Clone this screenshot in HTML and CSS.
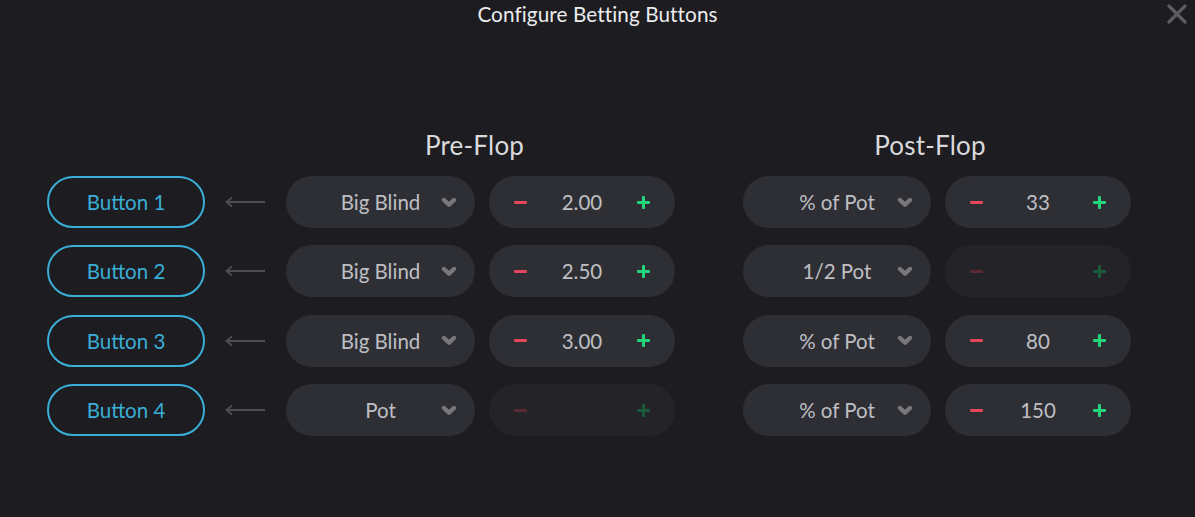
FILE: index.html
```html
<!DOCTYPE html>
<html>
<head>
<meta charset="utf-8">
<link rel="stylesheet" href="styles.css">
</head>
<body>
<div class="modal">
  <header class="title">Configure Betting Buttons</header>
  <button class="close" aria-label="Close">
    <svg width="20" height="20" viewBox="0 0 20 20"><path d="M2 2L18 18M18 2L2 18" stroke="#5b5b61" stroke-width="3.2" stroke-linecap="round"/></svg>
  </button>

  <div class="heads">
    <div class="spacer"></div>
    <div class="head pre">Pre-Flop</div>
    <div class="head post">Post-Flop</div>
  </div>

  <div class="rows">
    <div class="row">
      <div class="btn">Button 1</div>
      <div class="arrow"><svg width="40" height="12" viewBox="0 0 40 12"><path d="M7 1.5L1.5 6L7 10.5M2 6H40" stroke="#4c4c52" stroke-width="2" fill="none"/></svg></div>
      <div class="select pre-sel"><span class="val">Big Blind</span><svg class="chev" width="16" height="11" viewBox="0 0 16 11"><path d="M3 3L8 7.6L13 3" stroke="#77777c" stroke-width="4.4" fill="none" stroke-linecap="round" stroke-linejoin="round"/></svg></div>
      <div class="stepper"><span class="minus"></span><span class="num">2.00</span><span class="plus"></span></div>
      <div class="select post-sel"><span class="val">% of Pot</span><svg class="chev" width="16" height="11" viewBox="0 0 16 11"><path d="M3 3L8 7.6L13 3" stroke="#77777c" stroke-width="4.4" fill="none" stroke-linecap="round" stroke-linejoin="round"/></svg></div>
      <div class="stepper"><span class="minus"></span><span class="num">33</span><span class="plus"></span></div>
    </div>
    <div class="row">
      <div class="btn">Button 2</div>
      <div class="arrow"><svg width="40" height="12" viewBox="0 0 40 12"><path d="M7 1.5L1.5 6L7 10.5M2 6H40" stroke="#4c4c52" stroke-width="2" fill="none"/></svg></div>
      <div class="select pre-sel"><span class="val">Big Blind</span><svg class="chev" width="16" height="11" viewBox="0 0 16 11"><path d="M3 3L8 7.6L13 3" stroke="#77777c" stroke-width="4.4" fill="none" stroke-linecap="round" stroke-linejoin="round"/></svg></div>
      <div class="stepper"><span class="minus"></span><span class="num">2.50</span><span class="plus"></span></div>
      <div class="select post-sel"><span class="val">1/2 Pot</span><svg class="chev" width="16" height="11" viewBox="0 0 16 11"><path d="M3 3L8 7.6L13 3" stroke="#77777c" stroke-width="4.4" fill="none" stroke-linecap="round" stroke-linejoin="round"/></svg></div>
      <div class="stepper disabled"><span class="minus"></span><span class="num"></span><span class="plus"></span></div>
    </div>
    <div class="row">
      <div class="btn">Button 3</div>
      <div class="arrow"><svg width="40" height="12" viewBox="0 0 40 12"><path d="M7 1.5L1.5 6L7 10.5M2 6H40" stroke="#4c4c52" stroke-width="2" fill="none"/></svg></div>
      <div class="select pre-sel"><span class="val">Big Blind</span><svg class="chev" width="16" height="11" viewBox="0 0 16 11"><path d="M3 3L8 7.6L13 3" stroke="#77777c" stroke-width="4.4" fill="none" stroke-linecap="round" stroke-linejoin="round"/></svg></div>
      <div class="stepper"><span class="minus"></span><span class="num">3.00</span><span class="plus"></span></div>
      <div class="select post-sel"><span class="val">% of Pot</span><svg class="chev" width="16" height="11" viewBox="0 0 16 11"><path d="M3 3L8 7.6L13 3" stroke="#77777c" stroke-width="4.4" fill="none" stroke-linecap="round" stroke-linejoin="round"/></svg></div>
      <div class="stepper"><span class="minus"></span><span class="num">80</span><span class="plus"></span></div>
    </div>
    <div class="row">
      <div class="btn">Button 4</div>
      <div class="arrow"><svg width="40" height="12" viewBox="0 0 40 12"><path d="M7 1.5L1.5 6L7 10.5M2 6H40" stroke="#4c4c52" stroke-width="2" fill="none"/></svg></div>
      <div class="select pre-sel"><span class="val">Pot</span><svg class="chev" width="16" height="11" viewBox="0 0 16 11"><path d="M3 3L8 7.6L13 3" stroke="#77777c" stroke-width="4.4" fill="none" stroke-linecap="round" stroke-linejoin="round"/></svg></div>
      <div class="stepper disabled"><span class="minus"></span><span class="num"></span><span class="plus"></span></div>
      <div class="select post-sel"><span class="val">% of Pot</span><svg class="chev" width="16" height="11" viewBox="0 0 16 11"><path d="M3 3L8 7.6L13 3" stroke="#77777c" stroke-width="4.4" fill="none" stroke-linecap="round" stroke-linejoin="round"/></svg></div>
      <div class="stepper"><span class="minus"></span><span class="num">150</span><span class="plus"></span></div>
    </div>
  </div>
</div>
</body>
</html>
```
FILE: styles.css
```css
html, body {
  margin: 0;
  padding: 0;
  background: #1c1c21;
}
body {
  font-family: Lato, "Open Sans", sans-serif;
  width: 1195px;
  height: 517px;
  overflow: hidden;
}
.modal {
  position: relative;
  height: 517px;
}
.title {
  text-align: center;
  color: #ececee;
  font-size: 20.7px;
  line-height: 20px;
  padding-top: 4px;
  letter-spacing: 0.1px;
}
.close {
  position: absolute;
  top: 4px;
  right: 8px;
  background: none;
  border: 0;
  padding: 0;
  width: 20px;
  height: 20px;
  display: flex;
}
.heads {
  display: flex;
  margin-top: 107px;
  height: 28px;
  align-items: center;
}
.spacer {
  width: 286px;
}
.head {
  color: #d9d9dc;
  font-size: 26px;
  text-align: center;
  letter-spacing: 0.2px;
}
.head.pre {
  width: 377px;
  padding-right: 12px;
}
.head.post {
  width: 374px;
  margin-left: 68px;
  padding-right: 14px;
}
.rows {
  display: flex;
  flex-direction: column;
  gap: 17.4px;
  margin-top: 17px;
  padding-left: 47px;
}
.row {
  display: flex;
  align-items: center;
  height: 52px;
}
.btn {
  box-sizing: border-box;
  width: 158px;
  height: 52px;
  border: 2.6px solid #3aaed6;
  border-radius: 26px;
  color: #3aaed6;
  font-size: 20.5px;
  display: flex;
  align-items: center;
  justify-content: center;
}
.arrow {
  width: 40px;
  margin-left: 20px;
  margin-right: 21px;
  display: flex;
  align-items: center;
}
.select {
  box-sizing: border-box;
  height: 52px;
  border-radius: 26px;
  background: #2e2f35;
  display: grid;
  grid-template-columns: 1fr auto 1fr;
  align-items: center;
  color: #bfbfc3;
  font-size: 20.5px;
}
.select .val {
  grid-column: 2;
}
.select .chev {
  grid-column: 3;
  justify-self: end;
  margin-right: 18px;
}
.pre-sel {
  width: 189px;
}
.post-sel {
  width: 188px;
  margin-left: 68px;
}
.stepper {
  box-sizing: border-box;
  width: 186px;
  height: 52px;
  margin-left: 14px;
  border-radius: 26px;
  background: #2e2f35;
  display: grid;
  grid-template-columns: 1fr auto 1fr;
  align-items: center;
  color: #bfbfc3;
  font-size: 20.5px;
  padding: 0 25px;
}
.stepper .num {
  grid-column: 2;
  text-align: center;
}
.minus {
  grid-column: 1;
  justify-self: start;
  width: 13px;
  height: 3px;
  background: #e2475b;
  border-radius: 1px;
}
.plus {
  grid-column: 3;
  justify-self: end;
  width: 13px;
  height: 13px;
  position: relative;
}
.plus::before, .plus::after {
  content: "";
  position: absolute;
  background: #23d47b;
  border-radius: 1px;
}
.plus::before {
  left: 0;
  top: 5px;
  width: 13px;
  height: 3px;
}
.plus::after {
  left: 5px;
  top: 0;
  width: 3px;
  height: 13px;
}
.stepper.disabled {
  background: #232328;
}
.stepper.disabled .minus {
  background: #5b2833;
}
.stepper.disabled .plus::before, .stepper.disabled .plus::after {
  background: #1c5a3c;
}
```
